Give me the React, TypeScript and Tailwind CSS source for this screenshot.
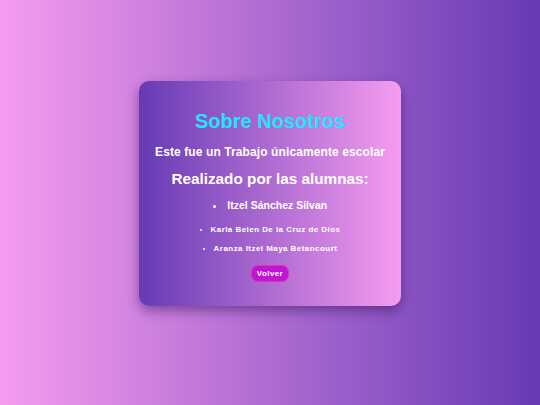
import React from 'react';

const alumnas = ['Karla Belen De la Cruz de Dios', 'Aranza Itzel Maya Betancourt'];

const App: React.FC = () => {
  return (
    <div
      className="min-h-[405px] w-full bg-[linear-gradient(to_right,#f69cef,#663ab4)] flex justify-center pt-[81px]"
      style={{ fontFamily: '"Liberation Sans", Arial, sans-serif' }}
    >
      {/* Tarjeta */}
      <div className="w-[262px] h-[225px] rounded-[10px] bg-[linear-gradient(to_right,#663ab4,#f69cef)] shadow-[0_5px_12px_rgba(40,10,80,0.45)] flex flex-col items-center pt-[28px] text-center">
        <h1 className="text-[20px] leading-[24px] font-bold text-[#1fe6ff]">Sobre Nosotros</h1>
        <p className="mt-[12px] text-[12px] leading-[14px] font-bold text-white tracking-[0.1px]">
          Este fue un Trabajo únicamente escolar
        </p>
        <h2 className="mt-[10px] text-[15.3px] leading-[19px] font-bold text-white">
          Realizado por las alumnas:
        </h2>
        <ul className="mt-[11px] list-disc list-inside text-white font-bold">
          <li className="text-[10.5px] leading-[13px]">Itzel Sánchez Silvan</li>
          {alumnas.map((nombre, i) => (
            <li key={nombre} className={`text-[8px] leading-[13px] tracking-[0.45px] ${i === 0 ? 'mt-[11px]' : 'mt-[6px]'}`}>
              {nombre}
            </li>
          ))}
        </ul>
        <button className="mt-[10px] h-[17px] px-[5px] rounded-[7px] bg-[#c214d6] border-[1.5px] border-[#e2379f] text-white text-[8px] tracking-[0.4px] font-bold leading-none">
          Volver
        </button>
      </div>
    </div>
  );
};

export default App;
